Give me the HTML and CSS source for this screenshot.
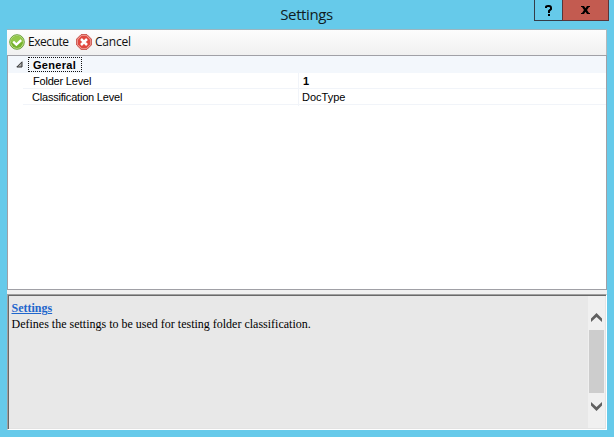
FILE: index.html
```html
<!DOCTYPE html>
<html lang="en">
<head>
<meta charset="utf-8">
<title>Settings</title>
<link rel="stylesheet" href="styles.css">
</head>
<body>
<div class="window">
  <header class="titlebar">
    <h1 class="title">Settings</h1>
    <div class="controls">
      <button class="control help" aria-label="Help"><svg width="7" height="11" viewBox="0 0 7 11"><path d="M1 3V2Q1 1 3 1h1q2 0 2 2v1L4 6v2M4 9v2" fill="none" stroke="#000" stroke-width="2"/></svg></button>
      <button class="control close" aria-label="Close"><svg width="9" height="8" viewBox="0 0 9 8"><path d="M0 0h3l1.500 2.200L6 0h3v1H8L6 4l2 3h1v1H6L4.500 5.800 3 8H0V7h1l2-3-2-3H0z" fill="#000"/></svg></button>
    </div>
  </header>
  <main class="client">
    <div class="toolbar">
      <button class="tool execute">
        <svg width="16" height="16" viewBox="0 0 16 16"><circle cx="8" cy="8" r="7.300" fill="#c2e08a" stroke="#5c982e" stroke-width=".9"/><circle cx="8" cy="8" r="6" fill="#74b22c"/><path d="M2 8a6 6 0 0 1 12 0Q8 9 2 8z" fill="#92c84a"/><path d="M4.200 7.600l3.200 3.100 4.800-4.600" fill="none" stroke="#fff" stroke-width="2.300"/></svg>
        <span>Execute</span>
      </button>
      <button class="tool cancel">
        <svg width="16" height="16" viewBox="0 0 16 16"><path d="M5 .7h6L15.300 5v6L11 15.300H5L.7 11V5z" fill="#f3a39c" stroke="#c4433b" stroke-linejoin="round"/><path d="M5.500 2h5L14 5.500v5L10.500 14h-5L2 10.500v-5z" fill="#e0483f"/><path d="M5 5l6 6M11 5l-6 6" stroke="#fff" stroke-width="2.500"/></svg>
        <span>Cancel</span>
      </button>
    </div>
    <section class="grid">
      <div class="category">
        <svg class="expander" width="7" height="7" viewBox="0 0 7 7"><path d="M6 .8V6H.8z" fill="#aaa" stroke="#333"/></svg>
        <span class="category-name">General</span>
      </div>
      <div class="row"><span class="name folder">Folder Level</span><span class="value bold">1</span></div>
      <div class="row"><span class="name classification">Classification Level</span><span class="value">DocType</span></div>
    </section>
    <section class="help-panel">
      <div class="help-text">
        <a class="help-title">Settings</a>
        <p>Defines the settings to be used for testing folder classification.</p>
      </div>
      <div class="scrollbar">
        <svg class="arrow" width="11" height="9" viewBox="0 0 11 9"><path d="M0 9V5.500L5.500 0 11 5.500V9L5.500 4z" fill="#606060"/></svg>
        <div class="thumb"></div>
        <svg class="arrow" width="11" height="9" viewBox="0 0 11 9"><path d="M0 0v3.500L5.500 9 11 3.500V0L5.500 5z" fill="#606060"/></svg>
      </div>
    </section>
  </main>
</div>
</body>
</html>
```
FILE: styles.css
```css
* { box-sizing: border-box; }
body { margin: 0; }
button { padding: 0; border: 0; background: none; font: inherit; color: inherit; }
svg { display: block; flex: none; }

.window {
  width: 614px;
  height: 437px;
  padding: 0 7px 7px;
  background: #66caea;
  overflow: hidden;
}
.titlebar { position: relative; height: 29px; }
.title {
  margin: 0;
  padding: 3px 1px 0 0;
  text-align: center;
  font: 400 15px/22px "Open Sans", "Noto Sans", sans-serif;
  letter-spacing: -0.4px;
  color: #101c22;
}
.controls { position: absolute; top: 0; right: -2px; display: flex; }
.control {
  display: flex;
  align-items: center;
  justify-content: center;
  height: 21px;
  border: 1px solid #343c48;
  border-top: 0;
}
.help { width: 28px; border-right: 0; }
.close { width: 47px; background: #c35b50; border-color: #5a3438; }

.client {
  display: flex;
  flex-direction: column;
  height: 401px;
  background: #f0f0f0;
}
.toolbar {
  display: flex;
  gap: 7px;
  height: 26px;
  padding: 0 2px;
  border-top: 1px solid #9cb6c0;
  border-right: 1px solid #b4b8ba;
  background: linear-gradient(#fdfdfd, #f0f0f0);
  font: 12px/16px "Open Sans", "Noto Sans", sans-serif;
  color: #111;
}
.tool { display: flex; align-items: center; gap: 3px; height: 24px; }
.execute { letter-spacing: -0.45px; width: 60px; }
.cancel { letter-spacing: -0.2px; }

.grid {
  height: 235px;
  border: 1px solid #a0a0a6;
  background: #fff;
  font: 11px/16px "Liberation Sans", sans-serif;
  color: #000;
}
.category {
  display: flex;
  align-items: center;
  height: 17px;
  padding-left: 8px;
  background: #f3f7fc;
}
.category-name {
  width: 54px;
  height: 15px;
  margin-left: 5px;
  padding-left: 4px;
  border: 1px dotted #111;
  font-weight: 700;
  line-height: 14px;
  letter-spacing: 0.3px;
}
.row {
  display: grid;
  grid-template-columns: 276px 1fr;
  height: 16px;
  margin-left: 15px;
  border-bottom: 1px solid #f1f4f9;
}
.name { padding-left: 10px; border-right: 1px solid #f1f4f9; line-height: 17px; }
.folder { letter-spacing: -0.2px; }
.classification { padding-left: 9px; letter-spacing: -0.2px; }
.value { padding-left: 3px; line-height: 17px; }
.bold { padding-left: 4px; font-weight: 700; }

.help-panel {
  display: flex;
  justify-content: space-between;
  height: 136px;
  margin-top: 4px;
  border: 1px solid;
  border-color: #a0a0a0 #fff #fff #a0a0a0;
  box-shadow: inset 1px 1px #696969, inset -1px -1px #e3e3e3;
  background: #e8e8e8;
}
.help-text { padding: 5px 0 0 3.500px; font: 12px/16px "Liberation Serif", serif; color: #000; }
.help-title { display: block; width: max-content; font-weight: 700; text-decoration: underline; color: #1f66cc; }
.help-text p { margin: 0; }
.scrollbar {
  display: flex;
  flex-direction: column;
  align-items: center;
  width: 17px;
  margin: 1px;
  padding-top: 17px;
  background: #f0f0f0;
}
.thumb { width: 15px; height: 63px; margin: 8px 0 9px; background: #cdcdcd; }
```
